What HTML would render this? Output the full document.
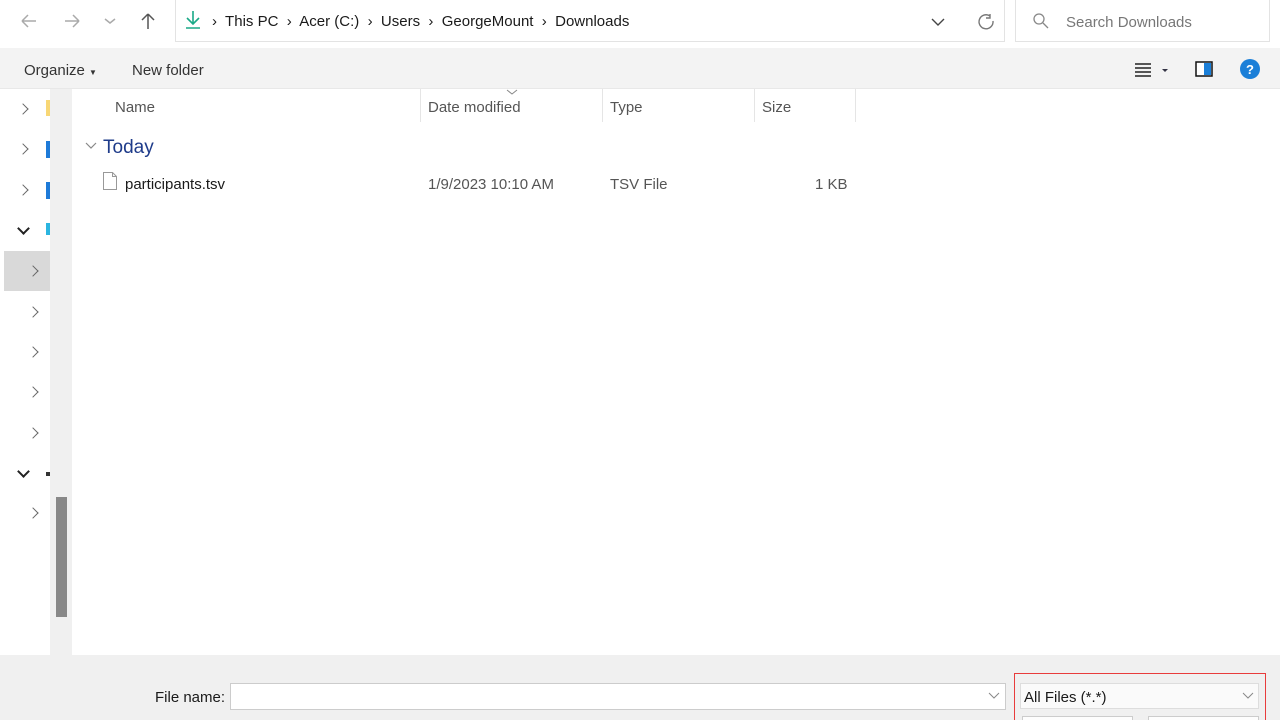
<!DOCTYPE html><html style="overflow:hidden;height:720px"><head><style>
body{margin:0;width:1280px;height:720px;overflow:hidden;background:#fff;font-family:"Liberation Sans",sans-serif;position:relative;font-size:15px;color:#1a1a1a}
.a{position:absolute}
.chev{position:absolute;width:7px;height:7px;border-right:1.6px solid #666;border-top:1.6px solid #666;transform:rotate(45deg)}
.chd{position:absolute;width:7px;height:7px;border-right:2px solid #222;border-bottom:2px solid #222;transform:rotate(45deg)}
</style></head><body>
<div class="a" style="left:0;top:0;width:1280px;height:48px;background:#fff"></div>
<svg class="a" style="left:0;top:0" width="175" height="45">
<path d="M22 21h14M22 21l6-6M22 21l6 6" stroke="#aaa" stroke-width="1.5" fill="none"/>
<path d="M65 21h14M79 21l-6-6M79 21l-6 6" stroke="#aaa" stroke-width="1.5" fill="none"/>
<path d="M105 19l5 4 5-4" stroke="#aaa" stroke-width="1.5" fill="none"/>
<path d="M148 14v15M148 14l-6 6M148 14l6 6" stroke="#555" stroke-width="1.5" fill="none"/>
</svg>
<div class="a" style="left:175px;top:-1px;width:830px;height:43px;border:1px solid #e3e3e3;box-sizing:border-box"></div>
<svg class="a" style="left:183px;top:9px" width="20" height="22"><path d="M10 2v13M4 9l6 6 6-6M3 19h14" stroke="#1aa987" stroke-width="1.6" fill="none"/></svg>
<div class="a" style="left:212px;top:13px;font-size:15px;white-space:pre">›  This PC  ›  Acer (C:)  ›  Users  ›  GeorgeMount  ›  Downloads</div>
<svg class="a" style="left:928px;top:12px" width="70" height="20"><path d="M4 7l6 6 6-6" stroke="#444" stroke-width="1.4" fill="none"/><path d="M62 4a7 7 0 1 0 3 5M62 2v4h-4" stroke="#777" stroke-width="1.4" fill="none"/></svg>
<div class="a" style="left:1015px;top:-1px;width:255px;height:43px;border:1px solid #e3e3e3;box-sizing:border-box"></div>
<svg class="a" style="left:1032px;top:12px" width="18" height="18"><circle cx="7" cy="7" r="5" stroke="#888" stroke-width="1.3" fill="none"/><path d="M11 11l5 5" stroke="#888" stroke-width="1.3"/></svg>
<div class="a" style="left:1066px;top:14px;color:#777">Search Downloads</div>
<div class="a" style="left:0;top:48px;width:1280px;height:40px;background:#f3f3f3;border-bottom:1px solid #e8e8e8"></div>
<div class="a" style="left:24px;top:62px;color:#333">Organize <span style="font-size:8px">▼</span></div>
<div class="a" style="left:132px;top:62px;color:#333">New folder</div>
<svg class="a" style="left:1133px;top:58px" width="140" height="24"><path d="M2 6h16M2 10h16M2 14h16M2 18h16" stroke="#222" stroke-width="1.5"/><path d="M29 11h6l-3 3z" fill="#334"/><rect x="63" y="4" width="16" height="14" fill="#fff" stroke="#111" stroke-width="1.5"/><rect x="71" y="5" width="7" height="12" fill="#1b7fd8"/><circle cx="117" cy="11" r="10" fill="#1b7fd8"/><text x="117" y="16" fill="#fff" font-size="13" text-anchor="middle" font-family="Liberation Sans" font-weight="bold">?</text></svg>
<div class="a" style="left:50px;top:89px;width:22px;height:566px;background:#f0f0f0"></div>
<div class="a" style="left:56px;top:497px;width:11px;height:120px;background:#888"></div>
<div class="a" style="left:4px;top:251px;width:46px;height:40px;background:#d9d9d9"></div>
<div class="chev" style="left:19px;top:105px"></div><div class="chev" style="left:19px;top:145px"></div><div class="chev" style="left:19px;top:186px"></div>
<div class="chd" style="left:19px;top:224px"></div>
<div class="chev" style="left:29px;top:267px"></div><div class="chev" style="left:29px;top:308px"></div><div class="chev" style="left:29px;top:348px"></div><div class="chev" style="left:29px;top:388px"></div><div class="chev" style="left:29px;top:429px"></div>
<div class="chd" style="left:19px;top:467px"></div>
<div class="chev" style="left:29px;top:509px"></div>
<div class="a" style="left:46px;top:100px;width:4px;height:16px;background:#f8d775"></div>
<div class="a" style="left:46px;top:141px;width:4px;height:17px;background:#1e7ad8"></div>
<div class="a" style="left:46px;top:182px;width:4px;height:17px;background:#1e7ad8"></div>
<div class="a" style="left:46px;top:223px;width:4px;height:12px;background:#2bb5e0"></div>
<div class="a" style="left:46px;top:472px;width:4px;height:4px;background:#333"></div>
<div class="a" style="left:115px;top:99px;color:#555">Name</div>
<div class="a" style="left:420px;top:89px;width:1px;height:33px;background:#e5e5e5"></div>
<div class="a" style="left:428px;top:99px;color:#555">Date modified</div>
<svg class="a" style="left:506px;top:88px" width="12" height="8"><path d="M1 2l5 4 5-4" stroke="#888" fill="none"/></svg>
<div class="a" style="left:602px;top:89px;width:1px;height:33px;background:#e5e5e5"></div>
<div class="a" style="left:610px;top:99px;color:#555">Type</div>
<div class="a" style="left:754px;top:89px;width:1px;height:33px;background:#e5e5e5"></div>
<div class="a" style="left:762px;top:99px;color:#555">Size</div>
<div class="a" style="left:855px;top:89px;width:1px;height:33px;background:#e5e5e5"></div>
<svg class="a" style="left:84px;top:140px" width="16" height="12"><path d="M2 3l5 5 5-5" stroke="#888" stroke-width="1.2" fill="none"/></svg>
<div class="a" style="left:103px;top:137px;color:#1e3b8a;font-size:19px">Today</div>
<svg class="a" style="left:102px;top:171px" width="16" height="20"><path d="M1.5 1.5h9l4 4v13h-13z" fill="#fff" stroke="#999"/><path d="M10.5 1.5v4h4" fill="none" stroke="#999"/></svg>
<div class="a" style="left:125px;top:176px">participants.tsv</div>
<div class="a" style="left:428px;top:176px;color:#555">1/9/2023 10:10 AM</div>
<div class="a" style="left:610px;top:176px;color:#555">TSV File</div>
<div class="a" style="left:815px;top:176px;color:#555">1 KB</div>
<div class="a" style="left:0;top:655px;width:1280px;height:65px;background:#f0f0f0"></div>
<div class="a" style="left:155px;top:689px">File name:</div>
<div class="a" style="left:230px;top:683px;width:776px;height:27px;background:#fff;border:1px solid #ccc;box-sizing:border-box"></div>
<svg class="a" style="left:988px;top:691px" width="12" height="10"><path d="M1 2l5 5 5-5" stroke="#888" fill="none"/></svg>
<div class="a" style="left:1014px;top:673px;width:252px;height:50px;border:1px solid #e83c3c;box-sizing:border-box"></div>
<div class="a" style="left:1020px;top:683px;width:239px;height:26px;background:#fafafa;border:1px solid #ddd;box-sizing:border-box"></div>
<div class="a" style="left:1024px;top:689px">All Files (*.*)</div>
<svg class="a" style="left:1242px;top:691px" width="12" height="10"><path d="M1 2l5 5 5-5" stroke="#888" fill="none"/></svg>
<div class="a" style="left:1022px;top:716px;width:109px;height:4px;background:#fdfdfd;border:1px solid #ccc;border-bottom:0"></div>
<div class="a" style="left:1148px;top:716px;width:109px;height:4px;background:#fdfdfd;border:1px solid #ccc;border-bottom:0"></div>
</body></html>
